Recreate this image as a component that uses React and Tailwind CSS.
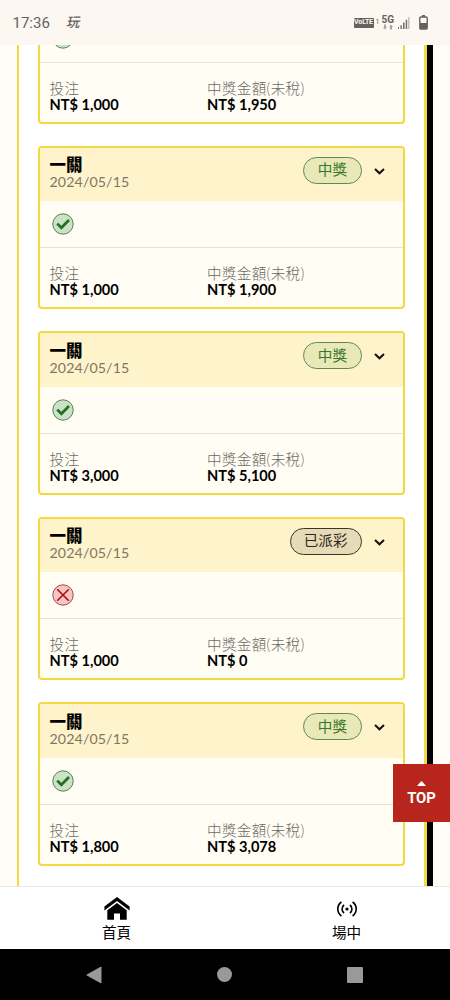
import React from "react";

const bets = [
  { id: 2, won: true, stake: "1,000", payout: "1,900" },
  { id: 3, won: true, stake: "3,000", payout: "5,100" },
  { id: 4, won: false, stake: "1,000", payout: "0" },
  { id: 5, won: true, stake: "1,800", payout: "3,078" },
];

function ResultIcon({ won }) {
  return won ? (
    <svg className="size-[22px] shrink-0" viewBox="0 0 22 22" fill="none">
      <circle cx="11" cy="11" r="10.2" fill="#c9e3c4" stroke="#5f7d5c" strokeWidth="1" />
      <path d="M5.2 10.6 9.4 14.8 17 7" stroke="#256e22" strokeWidth="2.7" />
    </svg>
  ) : (
    <svg className="size-[22px] shrink-0" viewBox="0 0 22 22" fill="none">
      <circle cx="11" cy="11" r="10.2" fill="#f8c5c3" stroke="#a54a50" strokeWidth="1" />
      <path d="M5.2 5.2 16.8 16.8M16.8 5.2 5.2 16.8" stroke="#b00d18" strokeWidth="1.6" />
    </svg>
  );
}

function Amount({ label, value }) {
  return (
    <div>
      <div className="h-4 text-[14.6px] font-light leading-4 tracking-[0.3px] text-[#6d6a64]">{label}</div>
      <div className="h-4 text-[14.6px] font-bold leading-4 text-black">NT$ {value}</div>
    </div>
  );
}

function Amounts({ stake, payout }) {
  return (
    <div className="grid grid-cols-[157.5px_1fr] pl-[9.5px] pt-[18px]">
      <Amount label="投注" value={stake} />
      <Amount label="中獎金額(未稅)" value={payout} />
    </div>
  );
}

function BetCard({ bet }) {
  return (
    <article className="h-[163.5px] shrink-0 overflow-hidden rounded-[4px] border-2 border-[#f3d840] bg-[#fffdf4]">
      <header className="flex h-[53.5px] justify-between bg-[#fff3cc] pl-[9.5px] pr-[18px] pt-[8.5px]">
        <div>
          <div className="h-[18px] text-[16.5px] font-black leading-[18px] text-black">一關</div>
          <div className="h-[18px] text-[14.2px] leading-[16px] tracking-[0.12px] text-[#7e7764]">2024/05/15</div>
        </div>
        <div className="flex h-7 items-center gap-[12.5px]">
          <span
            className={
              bet.won
                ? "flex h-[27px] items-center rounded-full border border-[#5f8a4e] bg-[#e8e8b8] px-[13.5px] text-[14.6px] text-[#39772f]"
                : "flex h-[27px] items-center rounded-full border border-[#3a3528] bg-[#e6dab7] px-[13px] text-[14.6px] text-[#2b271c]"
            }
          >
            {bet.won ? "中獎" : "已派彩"}
          </span>
          <svg className="mt-[2px] h-[7px] w-[11px]" viewBox="0 0 11 7" fill="none">
            <path d="M1 1 5.5 5.3 10 1" stroke="#14110a" strokeWidth="2" />
          </svg>
        </div>
      </header>
      <div className="flex h-[47px] items-center border-b border-[#e4e2dc] pl-[12px]">
        <ResultIcon won={bet.won} />
      </div>
      <Amounts stake={bet.stake} payout={bet.payout} />
    </article>
  );
}

function ScrolledCard() {
  return (
    <article className="h-[78.5px] shrink-0 overflow-hidden rounded-b-[4px] border-2 border-t-0 border-[#f3d840] bg-[#fffdf4]">
      <div className="flex h-[17.5px] items-end overflow-hidden border-b border-[#e8e6e0] pb-[13px] pl-[12px]">
        <ResultIcon won />
      </div>
      <Amounts stake="1,000" payout="1,950" />
    </article>
  );
}

function StatusBar() {
  return (
    <div className="flex h-[45px] shrink-0 items-center bg-[#fdf7f2] pl-[12.5px] pr-[22px] text-[#66615e]">
      <span className="mt-[2px] font-[Roboto,sans-serif] text-[15px] leading-none">17:36</span>
      <span className="ml-[17px] mt-px -skew-x-12 text-[13.5px] font-medium leading-none">玩</span>
      <div className="ml-auto flex items-center">
        <span className="flex h-[10px] w-5 items-center justify-center rounded-[1px] bg-[#66615e] font-[Roboto,sans-serif] text-[7px] font-bold leading-none tracking-tight text-[#fdf7f2]">VoLTE</span>
        <span className="ml-0.5 font-[Roboto,sans-serif] text-[7px] leading-none">1</span>
        <div className="ml-[2px] flex flex-col items-center">
          <span className="font-[Roboto,sans-serif] text-[10px] font-bold leading-[9px]">5G</span>
          <svg className="h-[6px] w-[11px]" viewBox="0 0 11 6" fill="#aaa5a1">
            <path d="M1 3h1V.5h2V3h1L3 5.5zM7 3h1v2.5h2V3h1L9 .5z" />
          </svg>
        </div>
        <svg className="ml-[3px] mt-px h-[14px] w-[13px]" viewBox="0 0 13 14" fill="#77726e">
          <path d="M1 11h1v2H1zM3.4 9.2h1.5V13H3.4zM6 6.5h1.6V13H6zM8.7 3.8h1.5V13H8.7z" />
          <path d="M11 1h1.5v12H11z" fill="#c5bfba" />
        </svg>
        <svg className="ml-[9px] h-[15px] w-[9px]" viewBox="0 0 9 15">
          <path d="M3 0h3v2H3z" fill="#66615e" />
          <rect x=".8" y="2" width="7.4" height="12" rx="1" fill="none" stroke="#66615e" strokeWidth="1.4" />
          <path d="M1 8h7v6H1z" fill="#66615e" />
        </svg>
      </div>
    </div>
  );
}

export default function App() {
  return (
    <div className="relative flex h-[1000px] w-[450px] flex-col overflow-hidden bg-[#fffdf5] font-[Lato,'Noto_Sans_CJK_TC',sans-serif]">
      <StatusBar />
      <main className="flex h-[841px] shrink-0 overflow-hidden pl-[17px] pr-[17px]">
        <div className="flex w-[410px] shrink-0 flex-col gap-[22px] border-l-2 border-r-[3px] border-[#f3d840] bg-white pl-[19px] pr-[19px]">
          <ScrolledCard />
          {bets.map((bet) => (
            <BetCard key={bet.id} bet={bet} />
          ))}
        </div>
        <div className="w-[6px] shrink-0 bg-black" />
      </main>
      <button className="absolute right-0 top-[764px] flex h-[58px] w-[57px] flex-col items-center bg-[#b7251d] pt-[17px] text-white">
        <svg className="h-[5px] w-[9px]" viewBox="0 0 9 5">
          <path d="M0 5 3.8.6Q4.5 0 5.2.6L9 5z" fill="white" />
        </svg>
        <span className="mt-1 font-[Roboto,sans-serif] text-[14.8px] font-bold leading-4">TOP</span>
      </button>
      <nav className="flex h-[63px] shrink-0 border-t border-[#e8e8e8] bg-white text-[14.6px] leading-4 text-black">
        <a className="flex w-[233px] shrink-0 flex-col items-center">
          <svg className="mt-[10px] h-[23px] w-[26px]" viewBox="0 0 26 23">
            <path d="M13 0 25.6 9.6V13.4L13 4 .4 13.4V9.6z" />
            <path d="M13 6 22.7 13.2V22.7H16V16.4H10V22.7H3.3V13.2z" />
          </svg>
          <span className="mt-[5px]">首頁</span>
        </a>
        <a className="flex w-[217px] shrink-0 flex-col items-center pl-[10px]">
          <svg className="mt-[14px] h-[16px] w-5" viewBox="0 0 20 16" fill="none" stroke="black" strokeWidth="1.6">
            <path d="M4.4 1C-.4 4.5-.4 11.5 4.4 15M7.1 4C4.4 6 4.4 10 7.1 12M12.9 4c2.7 2 2.7 6 0 8M15.6 1c4.8 3.5 4.8 10.5 0 14" />
            <circle cx="10" cy="8" r="1.6" fill="black" stroke="none" />
          </svg>
          <span className="mt-2">場中</span>
        </a>
      </nav>
      <div className="flex h-[51px] shrink-0 items-center justify-between bg-black pl-[86px] pr-[87px]">
        <svg className="h-[18px] w-4" viewBox="0 0 16 18" fill="#999">
          <path d="M15.5 1.2v15.6q0 .8-.8.4L.8 9.5q-.7-.5 0-1L14.7.8q.8-.4.8.4z" />
        </svg>
        <div className="size-[15px] rounded-full bg-[#999]" />
        <div className="size-4 rounded-[1px] bg-[#999]" />
      </div>
    </div>
  );
}
